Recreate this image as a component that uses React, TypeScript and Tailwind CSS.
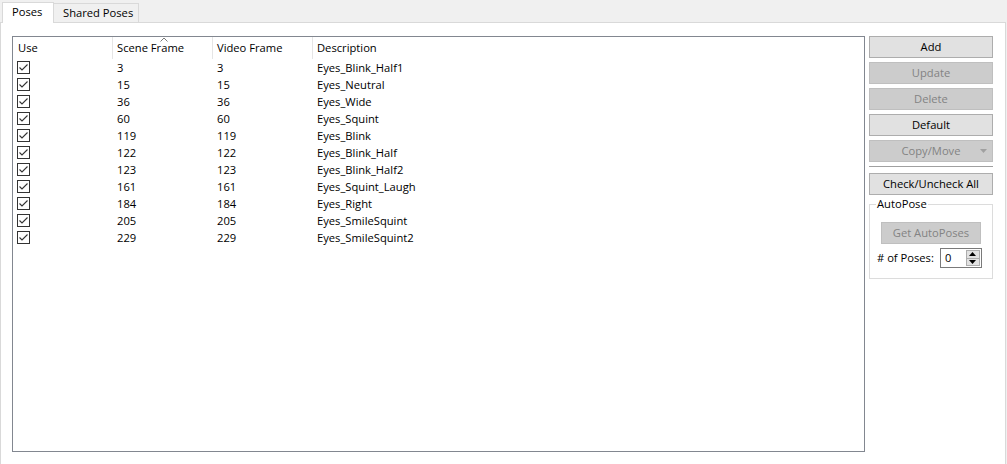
import React from 'react';

interface Pose {
  scene: number;
  video: number;
  desc: string;
}

const poses: Pose[] = [
  { scene: 3, video: 3, desc: 'Eyes_Blink_Half1' },
  { scene: 15, video: 15, desc: 'Eyes_Neutral' },
  { scene: 36, video: 36, desc: 'Eyes_Wide' },
  { scene: 60, video: 60, desc: 'Eyes_Squint' },
  { scene: 119, video: 119, desc: 'Eyes_Blink' },
  { scene: 122, video: 122, desc: 'Eyes_Blink_Half' },
  { scene: 123, video: 123, desc: 'Eyes_Blink_Half2' },
  { scene: 161, video: 161, desc: 'Eyes_Squint_Laugh' },
  { scene: 184, video: 184, desc: 'Eyes_Right' },
  { scene: 205, video: 205, desc: 'Eyes_SmileSquint' },
  { scene: 229, video: 229, desc: 'Eyes_SmileSquint2' },
];

const CheckBox = () => (
  <div className="w-[13px] h-[13px] border border-[#333333] bg-white flex items-center justify-center">
    <svg width="11" height="11" viewBox="0 0 11 11">
      <path d="M1.5 5.5 L4 8 L9.5 2.5" fill="none" stroke="#333333" strokeWidth="1.1" />
    </svg>
  </div>
);

const Btn = ({ label, disabled, arrow }: { label: string; disabled?: boolean; arrow?: boolean }) => (
  <div
    className={
      'relative h-[22px] w-full flex items-center justify-center border ' +
      (disabled ? 'bg-[#cccccc] border-[#bfbfbf] text-[#838383]' : 'bg-[#e1e1e1] border-[#adadad] text-black')
    }
  >
    {label}
    {arrow && (
      <svg className="absolute right-[5px] top-[8px]" width="7" height="4" viewBox="0 0 7 4">
        <path d="M0 0 L7 0 L3.5 4 Z" fill="#a0a0a0" />
      </svg>
    )}
  </div>
);

const App = () => {
  return (
    <div
      className="w-[1007px] h-[464px] bg-[#f0f0f0] flex flex-col overflow-hidden text-[11.2px] text-black"
      style={{ fontFamily: '"Open Sans", Roboto, sans-serif' }}
    >
      {/* tab strip */}
      <div className="h-[22px] shrink-0 flex items-end pl-[2px] relative z-10">
        <div className="h-[21px] w-[52px] bg-white border border-b-0 border-[#d9d9d9] flex items-center pl-[9px] mb-[-1px] pb-[1px]">
          Poses
        </div>
        <div className="h-[19px] w-[85px] bg-[#f0f0f0] border border-l-0 border-b-0 border-[#d9d9d9] flex items-center pl-[9px]">
          Shared Poses
        </div>
      </div>

      {/* tab page */}
      <div className="h-[460px] shrink-0 w-[1006px] bg-white border border-b-0 border-[#d9d9d9] flex gap-[4px] pl-[11px] pt-[13px]">
        {/* list view */}
        <div className="w-[853px] h-[416px] border border-[#828790] bg-white flex flex-col">
          <div className="relative h-[22px] flex items-center">
            <div className="w-[100px] h-full pl-[5px] flex items-center border-r border-[#e5e5e5]">Use</div>
            <div className="w-[100px] h-full pl-[4px] flex items-center border-r border-[#e5e5e5]">Scene Frame</div>
            <div className="w-[100px] h-full pl-[4px] flex items-center border-r border-[#e5e5e5]">Video Frame</div>
            <div className="flex-1 h-full pl-[4px] flex items-center">Description</div>
            <svg className="absolute left-[147px] top-0" width="8" height="5" viewBox="0 0 8 5">
              <path d="M0.5 4.5 L4 1 L7.5 4.5" fill="none" stroke="#7a7a7a" strokeWidth="1" />
            </svg>
          </div>
          {poses.map((p) => (
            <div key={p.scene} className="h-[17px] flex items-center">
              <div className="w-[101px] pl-[4px] flex items-center">
                <CheckBox />
              </div>
              <div className="w-[100px] pl-[3px] pt-[2px]">{p.scene}</div>
              <div className="w-[100px] pl-[3px] pt-[2px]">{p.video}</div>
              <div className="flex-1 pl-[3px] pt-[2px]">{p.desc}</div>
            </div>
          ))}
        </div>

        {/* buttons */}
        <div className="w-[124px] flex flex-col">
          <div className="flex flex-col gap-[4px]">
            <Btn label="Add" />
            <Btn label="Update" disabled />
            <Btn label="Delete" disabled />
            <Btn label="Default" />
            <Btn label="Copy/Move" disabled arrow />
          </div>
          <div className="h-px bg-[#a0a0a0] mt-[4px]" />
          <div className="mt-[6px]">
            <Btn label="Check/Uncheck All" />
          </div>
          <div className="relative mt-[9px] h-[75px] border border-[#dcdcdc] flex flex-col">
            <span className="absolute left-[6px] top-[-9px] bg-white px-[1px] leading-[16px]">AutoPose</span>
            <div className="mt-[17px] mx-[11px]">
              <Btn label="Get AutoPoses" disabled />
            </div>
            <div className="flex items-center mt-[4px] pl-[7px] gap-[6px]">
              <span>#&nbsp;of Poses:</span>
              <div className="w-[42px] h-[20px] border border-[#7a7a7a] flex items-center justify-between pl-[4px] pr-[1px]">
                <span>0</span>
                <div className="w-[14px] h-[16px] flex flex-col border border-[#adadad] bg-[#e1e1e1]">
                  <div className="flex-1 flex items-center justify-center border-b border-[#adadad]">
                    <svg width="7" height="4" viewBox="0 0 7 4">
                      <path d="M0 4 L7 4 L3.5 0 Z" fill="#000" />
                    </svg>
                  </div>
                  <div className="flex-1 flex items-center justify-center">
                    <svg width="7" height="4" viewBox="0 0 7 4">
                      <path d="M0 0 L7 0 L3.5 4 Z" fill="#000" />
                    </svg>
                  </div>
                </div>
              </div>
            </div>
          </div>
        </div>
      </div>
    </div>
  );
};

export default App;
